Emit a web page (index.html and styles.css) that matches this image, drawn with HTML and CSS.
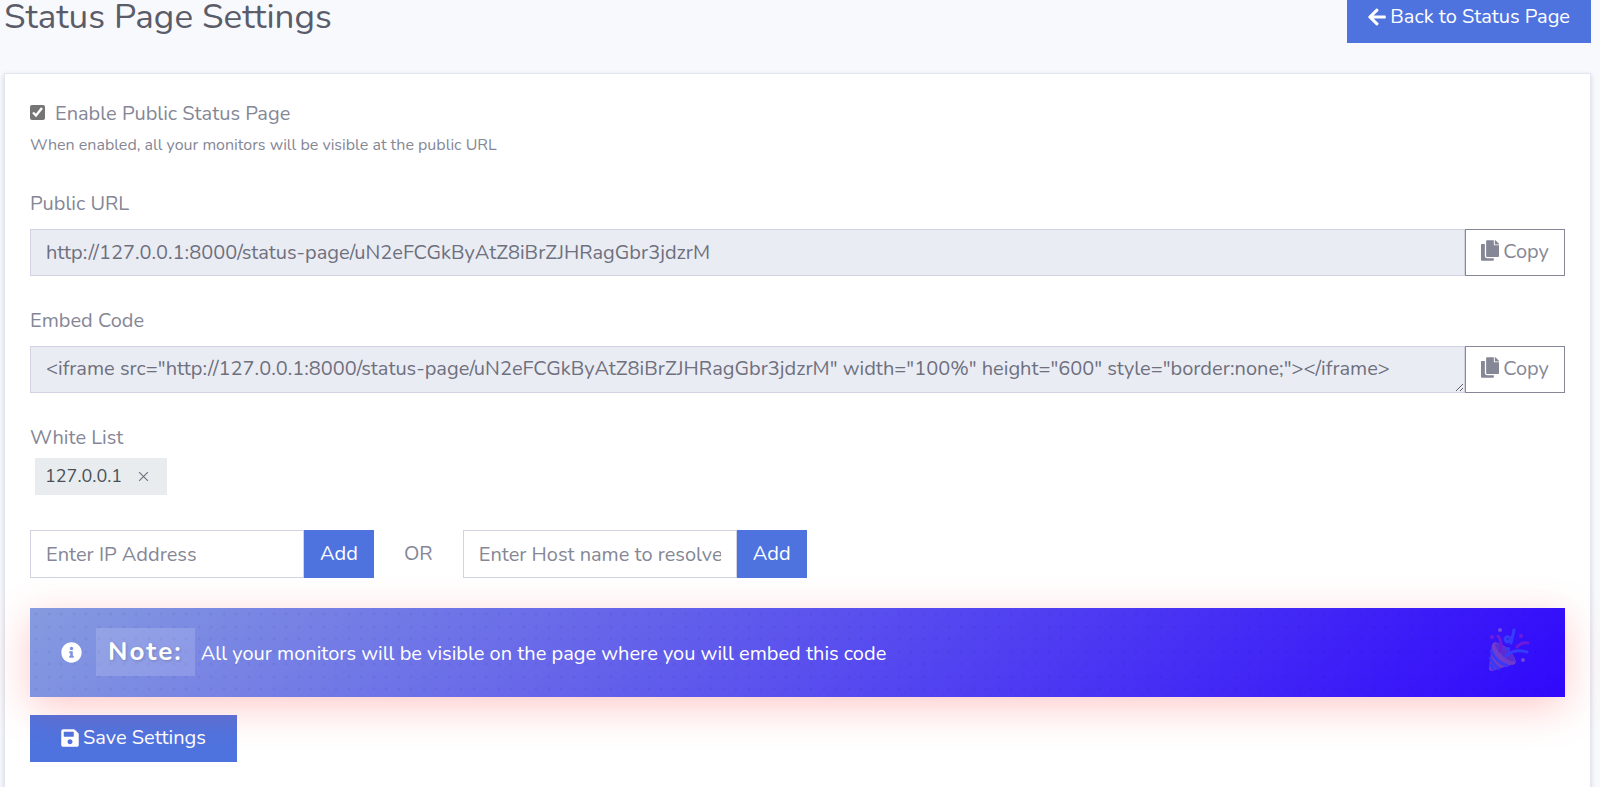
FILE: index.html
```html
<!DOCTYPE html>
<html lang="en">
<head>
<meta charset="utf-8">
<title>Status Page Settings</title>
<link rel="stylesheet" href="styles.css">
</head>
<body>
<svg class="sprite" aria-hidden="true">
  <symbol id="copy" viewBox="0 0 448 512"><path d="M320 448v40c0 13-11 24-24 24H24c-13 0-24-11-24-24V120c0-13 11-24 24-24h72v296c0 31 25 56 56 56zM320 112V0H152c-13 0-24 11-24 24v368c0 13 11 24 24 24h272c13 0 24-11 24-24V128H336c-9 0-16-7-16-16zm121-31L367 7c-5-5-11-7-17-7h-6v104h104v-6c0-6-2-12-7-17z"/></symbol>
</svg>
<main class="page">
  <header class="page-header">
    <h1 class="page-title">Status Page Settings</h1>
    <a class="btn btn-primary btn-back" href="#"><svg class="icon" viewBox="0 0 448 512" aria-hidden="true"><path d="M257.500 445.100l-22.200 22.200c-9.400 9.400-24.600 9.400-33.900 0L7 273c-9.400-9.400-9.400-24.600 0-33.900L201.400 44.700c9.400-9.400 24.600-9.400 33.900 0l22.200 22.200c9.500 9.500 9.300 25-.4 34.300L136.600 216H424c13.300 0 24 10.700 24 24v32c0 13.300-10.700 24-24 24H136.600l120.500 114.800c9.800 9.300 10 24.800.4 34.300z"/></svg>Back to Status Page</a>
  </header>
  <form class="card">
    <div class="check-row">
      <input class="check" type="checkbox" id="enable" checked>
      <label for="enable">Enable Public Status Page</label>
    </div>
    <small class="help">When enabled, all your monitors will be visible at the public URL</small>

    <div class="field">
      <label for="url">Public URL</label>
      <div class="input-group">
        <input class="control readonly" id="url" type="text" readonly value="http://127.0.0.1:8000/status-page/uN2eFCGkByAtZ8iBrZJHRagGbr3jdzrM">
        <button class="btn btn-outline" type="button"><svg class="icon icon-copy" aria-hidden="true"><use href="#copy"/></svg>Copy</button>
      </div>
    </div>

    <div class="field">
      <label for="embed">Embed Code</label>
      <div class="input-group">
        <textarea class="control readonly" id="embed" rows="1" readonly>&lt;iframe src="http://127.0.0.1:8000/status-page/uN2eFCGkByAtZ8iBrZJHRagGbr3jdzrM" width="100%" height="600" style="border:none;"&gt;&lt;/iframe&gt;</textarea>
        <button class="btn btn-outline" type="button"><svg class="icon icon-copy" aria-hidden="true"><use href="#copy"/></svg>Copy</button>
      </div>
    </div>

    <div class="whitelist">
      <span class="whitelist-title">White List</span>
      <div class="tags">
        <span class="tag">127.0.0.1<button class="tag-remove" type="button" aria-label="Remove 127.0.0.1"><svg viewBox="0 0 10 10" aria-hidden="true"><path d="M1 1l8 8M9 1l-8 8"/></svg></button></span>
      </div>
    </div>

    <div class="add-row">
      <div class="input-group add-group">
        <input class="control" type="text" placeholder="Enter IP Address" aria-label="IP address">
        <button class="btn btn-primary btn-add" type="button">Add</button>
      </div>
      <span>OR</span>
      <div class="input-group add-group">
        <input class="control" type="text" placeholder="Enter Host name to resolve" aria-label="Host name">
        <button class="btn btn-primary btn-add" type="button">Add</button>
      </div>
    </div>

    <div class="note">
      <svg class="note-icon" viewBox="0 0 512 512" aria-hidden="true"><path d="M256 8C119 8 8 119 8 256s111 248 248 248 248-111 248-248S393 8 256 8zm0 110c23.200 0 42 18.800 42 42s-18.800 42-42 42-42-18.800-42-42 18.800-42 42-42zm56 254c0 6.600-5.400 12-12 12h-88c-6.600 0-12-5.400-12-12v-24c0-6.600 5.400-12 12-12h12v-64h-12c-6.600 0-12-5.400-12-12v-24c0-6.600 5.400-12 12-12h64c6.600 0 12 5.400 12 12v100h12c6.600 0 12 5.400 12 12z"/></svg>
      <div class="note-body">
        <strong class="note-label">Note:</strong>
        <span>All your monitors will be visible on the page where you will embed this code</span>
      </div>
      <svg class="party" viewBox="0 0 42 44" aria-hidden="true">
        <path d="M4 17Q5 15 9 16L27 34Q28 35 26 36L4 43Q1 43 1 40z" fill="#f5a060"/>
        <ellipse cx="16" cy="25.500" rx="15" ry="6" transform="rotate(43 16 25.500)" fill="#f9a070"/>
        <ellipse cx="17" cy="24.500" rx="13" ry="4" transform="rotate(43 17 24.500)" fill="#b0707a"/>
        <path d="M3 22Q7 34 20 38M2 29Q5 37 12 41M2 36L6 42" fill="none" stroke="#3f8fff" stroke-width="3"/>
        <g fill="none" stroke-width="3" stroke-linecap="round">
          <path d="M10 8Q15 14 12 23" stroke="#f0309c"/>
          <path d="M29 19Q33 14 40 15" stroke="#f0309c"/>
          <path d="M18 28Q26 20 39 24" stroke="#3fa0ff"/>
          <path d="M26 2Q25 7 23 15M23 11Q21 8 18 9Q16 12 19 14Q22 13 24 10" stroke="#3fa0ff"/>
        </g>
        <g fill="#f0309c"><circle cx="4" cy="9" r="2"/><circle cx="33" cy="8" r="2"/></g>
        <g fill="#ffc0a0"><circle cx="12" cy="2" r="2"/><circle cx="35" cy="32" r="2"/></g>
        <circle cx="20" cy="21" r="2" fill="#3fa0ff"/>
      </svg>
    </div>

    <button class="btn btn-primary btn-save" type="submit"><svg class="icon" viewBox="0 0 448 512" aria-hidden="true"><path d="M433.900 129.900l-83.900-83.900A48 48 0 0 0 316.100 32H48C21.500 32 0 53.500 0 80v352c0 26.500 21.500 48 48 48h352c26.500 0 48-21.500 48-48V163.900a48 48 0 0 0-14.100-34zM224 416c-35.300 0-64-28.700-64-64s28.700-64 64-64 64 28.700 64 64-28.700 64-64 64zm96-304.500V212c0 6.600-5.400 12-12 12H76c-6.600 0-12-5.400-12-12V108c0-6.600 5.400-12 12-12h228.500c3.200 0 6.200 1.300 8.500 3.500l3.500 3.500a12 12 0 0 1 3.500 8.500z"/></svg>Save Settings</button>
  </form>
</main>
</body>
</html>
```
FILE: styles.css
```css
* { box-sizing: border-box; }

body {
  margin: 0;
  background: #f8f9fc;
  color: #858796;
  font-family: Nunito, Lato, "Noto Sans", sans-serif;
  font-size: 20px;
  line-height: 30px;
}

input, textarea, button { font: inherit; }

.sprite { position: absolute; width: 0; height: 0; }

.page {
  display: flex;
  flex-direction: column;
  min-height: 100vh;
  padding: 0 9px 0 4px;
}

.page-header {
  display: flex;
  justify-content: space-between;
  align-items: flex-start;
  margin-bottom: 30px;
}

.page-title {
  margin: 0;
  color: #5a5c69;
  font-size: 35px;
  font-weight: 400;
  line-height: 34px;
}

.btn {
  display: inline-flex;
  align-items: center;
  justify-content: center;
  gap: 4px;
  border: 1px solid transparent;
  border-radius: 0;
  padding: 7px 15px 8px;
  text-decoration: none;
  white-space: nowrap;
}

.btn-primary { background: #4e73df; border-color: #4e73df; color: #fff; }
.btn-outline { background: #fff; border-color: #858796; color: #858796; width: 100px; }
.btn-back { padding: 1px 20px 10px; }
.btn-add { width: 70px; }
.btn-save { padding: 7px 30px 8px; }

.icon { width: 18px; height: 20px; fill: currentColor; flex: none; }
.icon-copy { height: 21px; margin-bottom: 3px; }

.card {
  flex: 1;
  background: #fff;
  border: 1px solid #e3e6f0;
  border-bottom: 0;
  padding: 25px 25px 24px;
  box-shadow: 0 2px 5px rgba(58, 59, 69, 0.2);
}

.check-row { display: flex; align-items: center; gap: 10px; }
.check { width: 15px; height: 15px; margin: 0 0 3px; accent-color: #757575; }
.help { display: block; font-size: 16px; line-height: 32px; }

.field { margin-top: 28px; }
.field label { display: block; margin-bottom: 10px; }
.field + .field { margin-top: 30px; }

.input-group { display: flex; align-items: stretch; }

.control {
  flex: 1;
  min-width: 0;
  height: 47px;
  margin: 0;
  padding: 7px 15px;
  border: 1px solid #d1d3e2;
  border-radius: 0;
  background: #fff;
  color: #6e707e;
}
.control::placeholder { color: #858796; opacity: 1; }
.readonly { background: #eaecf4; }
textarea.control { resize: vertical; overflow: hidden; }

.whitelist { margin-top: 30px; }
.whitelist-title { display: block; }
.tags { display: flex; padding: 5px 5px 6px; }
.tag {
  display: flex;
  align-items: center;
  gap: 16px;
  padding: 3px 18px 4px 10px;
  background: #e9ecef;
  color: #495057;
  font-size: 18px;
}
.tag-remove { display: flex; border: 0; padding: 0; background: none; color: #6e707e; }
.tag-remove svg { width: 11px; height: 11px; stroke: currentColor; fill: none; }

.add-row { display: flex; align-items: center; gap: 30px; margin-top: 29px; }
.add-group { width: 344px; }
.add-group .control { height: 48px; }

.note {
  position: relative;
  display: flex;
  align-items: center;
  margin: 30px 0 18px;
  padding: 20px 35px 21px 31px;
  color: #fff;
  background:
    radial-gradient(circle at 6px 6px, rgba(0, 0, 60, 0.05) 1px, transparent 2px) 0 0 / 25px 25px,
    radial-gradient(circle at 19px 6px, rgba(0, 0, 60, 0.05) 1px, transparent 2px) 0 0 / 25px 25px,
    radial-gradient(circle at 6px 19px, rgba(0, 0, 60, 0.05) 1px, transparent 2px) 0 0 / 25px 25px,
    radial-gradient(circle at 19px 19px, rgba(0, 0, 60, 0.05) 1px, transparent 2px) 0 0 / 25px 25px,
    linear-gradient(135deg, #859bdf, #3008fc);
  box-shadow: 0 10px 40px rgba(255, 75, 75, 0.3);
}
.note-icon { width: 21px; height: 21px; fill: currentColor; }
.note-body { display: flex; align-items: baseline; gap: 6px; margin-left: 14px; }
.note-label {
  padding: 8px 12px;
  background: rgba(255, 255, 255, 0.15);
  font-size: 26px;
  font-weight: 700;
  line-height: 32px;
  letter-spacing: 2px;
  text-shadow: 1px 1px 3px rgba(0, 0, 0, 0.2);
}
.party { width: 42px; height: 44px; margin: 0 0 4px auto; opacity: 0.3; }
```
